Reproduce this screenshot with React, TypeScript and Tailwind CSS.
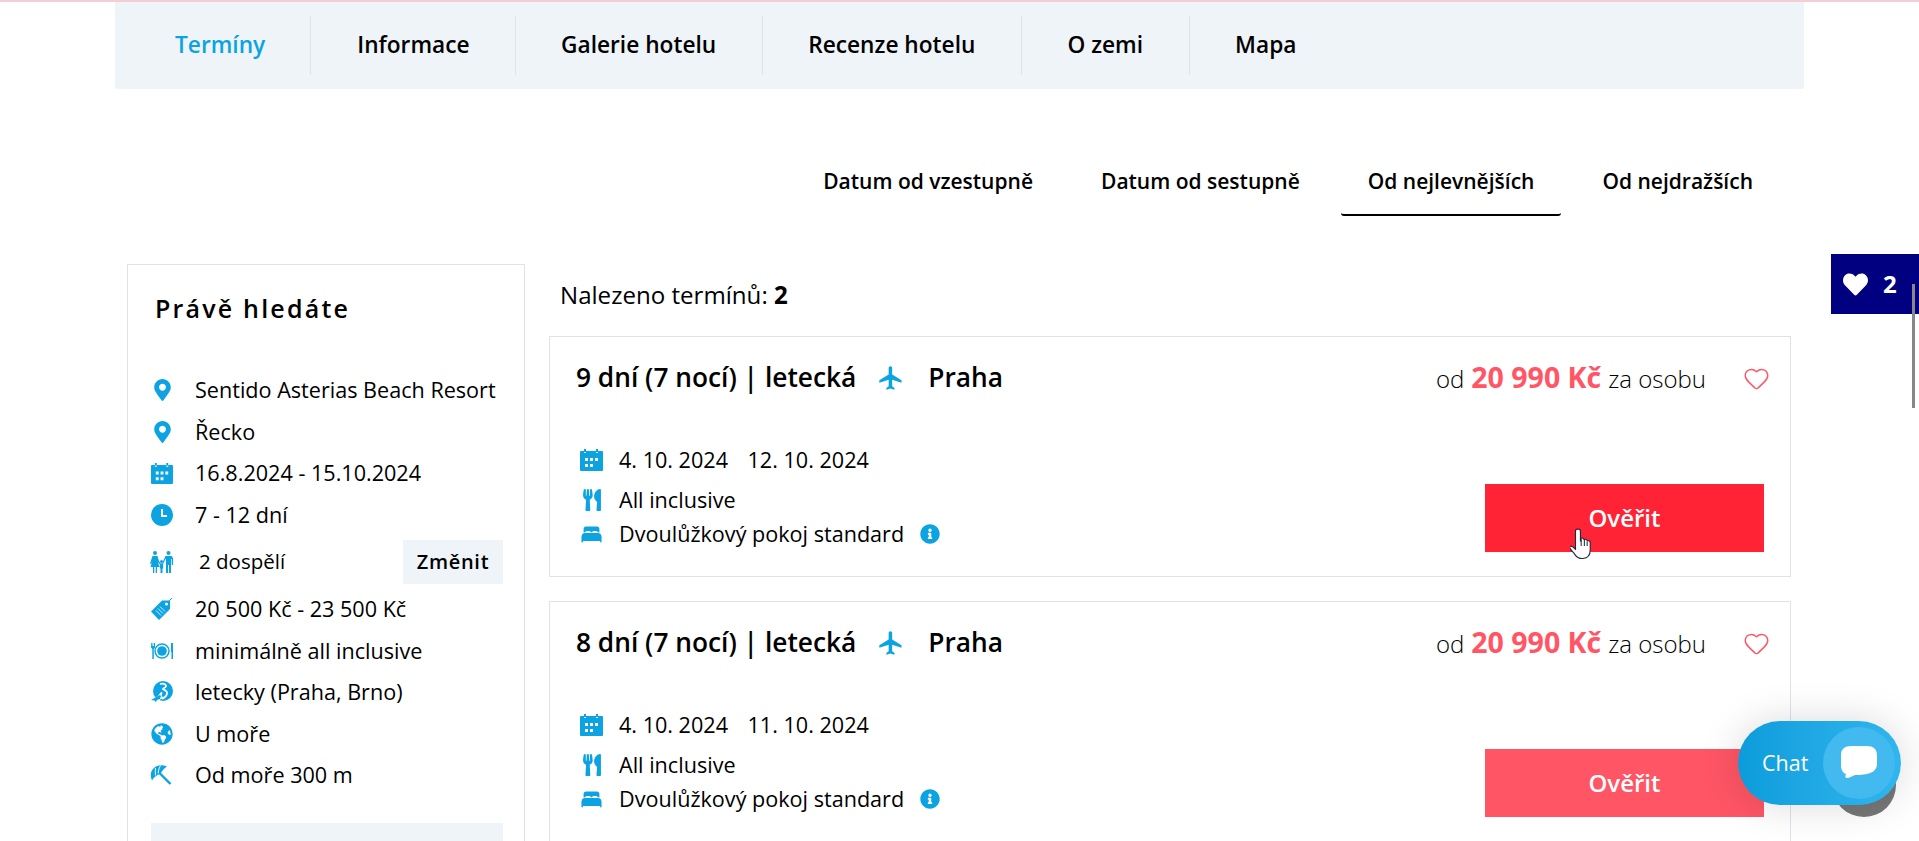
import React from "react";
import { FaMapMarkerAlt, FaGlobeAmericas, FaUtensils, FaInfoCircle, FaHeart } from "react-icons/fa";
import { MdFlight } from "react-icons/md";
import { IoBed } from "react-icons/io5";
import { Heart } from "lucide-react";

const BLUE = "text-[#0ca3e3]";

const CalendarIcon = ({ className = "" }: { className?: string }) => (
  <svg viewBox="0 0 23 22" className={className} fill="currentColor">
    <path d="M4 0h2v3H4zM16 0h2v3h-2z" />
    <path fillRule="evenodd" d="M1 2h3v2h2V2h10v2h2V2h4a1 1 0 0 1 1 1v18a1 1 0 0 1-1 1H1a1 1 0 0 1-1-1V3a1 1 0 0 1 1-1zM5 9v3h3V9zm5 0v3h3V9zm5 0v3h3V9zM5 15v3h3v-3zm5 0v3h3v-3z" />
  </svg>
);

const ClockIcon = ({ className = "" }: { className?: string }) => (
  <svg viewBox="0 0 22 22" className={className}>
    <circle cx="11" cy="11" r="11" fill="currentColor" />
    <path d="M11 5v7h5" stroke="#fff" strokeWidth="2" fill="none" />
  </svg>
);

const PeopleIcon = ({ className = "" }: { className?: string }) => (
  <svg viewBox="0 0 24 22" className={className} fill="currentColor">
    <circle cx="5" cy="2" r="2" />
    <path d="M2.500 5h5L9 10l2 3-1 .5-2-2.500L9.500 16H7v6H5.700v-6H4.300v6H3v-6H.5L2 11l-1 2-1-.5z" />
    <circle cx="18.500" cy="2" r="2" />
    <path d="M15.500 5h6L23 7v7h-1.300V8h-.7v14h-2v-8h-1v8h-2V8h-.5L13 13l-1-.6z" />
    <circle cx="11.500" cy="10.500" r="1.500" />
    <path d="M9.800 12.500h3.400v5h-.7V22h-2v-4.500h-.7z" />
  </svg>
);

const TagIcon = ({ className = "" }: { className?: string }) => (
  <svg viewBox="0 0 22 22" className={className} fill="currentColor">
    <path fillRule="evenodd" d="M0 13.500 11 2.500H19V11L8 22ZM15.500 4.500a1.500 1.500 0 1 0 0 3 1.500 1.500 0 0 0 0-3z" />
    <path d="M16 5 21 0" stroke="currentColor" strokeWidth="1" />
    <path d="M5 12.500l5 5M7 10.500l5 5M9 8.500l5 5" stroke="#fff" strokeWidth="0.8" />
  </svg>
);

const PlateIcon = ({ className = "" }: { className?: string }) => (
  <svg viewBox="0 0 22 22" className={className} fill="currentColor">
    <circle cx="11" cy="11" r="7" fill="none" stroke="currentColor" strokeWidth="1.400" />
    <circle cx="11" cy="11" r="4.800" />
    <path d="M0 3h.8v3h.7V3h.8v3h.7V3H4v4.500L2.800 9v10H1.300V9L0 7.500zM20 3h2v16h-1.500v-7H20z" />
  </svg>
);

const GlobePlaneIcon = ({ className = "" }: { className?: string }) => (
  <svg viewBox="0 0 22 22" className={className}>
    <circle cx="12" cy="10" r="10" fill="currentColor" />
    <path d="M9 3c3-1 6 0 6 2s-3 2-3 3 4 1 4 4-3 5-5 6" stroke="#fff" strokeWidth="1.800" fill="none" />
    <path d="M0 19l7-4 3-4 1.500.5-1 4 3 .5-1 1.500-3 .5-1 2.500-2-.5-1-1.500z" fill="#fff" />
    <path d="M0 19l7-4 2-1 1 1-1 3-3 1-1 2-1.500-1.500z" fill="currentColor" />
  </svg>
);

const UmbrellaIcon = ({ className = "" }: { className?: string }) => (
  <svg viewBox="0 0 22 22" className={className} fill="currentColor">
    <path d="M2 16.500C-2.500 7 6-2 17 2.500 14 4.500 12 6.500 10.500 10 7 10.500 4 13 2 16.500z" />
    <path d="M5.500 4Q5 8 5.500 11.500M10.500 1.500Q8.500 4.500 8 9.500" stroke="#fff" strokeWidth="0.900" fill="none" />
    <path d="M10 9.500l10.500 10.500" stroke="currentColor" strokeWidth="2.400" />
  </svg>
);

const ChatBubble = ({ className = "" }: { className?: string }) => (
  <svg viewBox="0 0 36 34" className={className} fill="#fff">
    <path d="M10 0h16c6 0 10 3 10 9v9c0 6-5 9-10 10-5 1-9 1-12 1-3 1-6 3-8 3-2 0-2-2-1-4-3-1-5-4-5-9V9C0 3 4 0 10 0z" />
  </svg>
);

const HandCursor = () => (
  <svg viewBox="0 0 24 32" className="absolute left-[1570px] top-[527px] w-[25px] h-[33px]">
    <path
      d="M8 2c1.300 0 2 1 2 2v9.500l.7-.1V11c1.600-.8 2.500 0 2.600 1l.5.2c1.500-.8 2.500 0 2.700 1l.5.300c1.500-.6 2.500.2 2.500 1.500v7c0 4-2 8-7 8.500-4 .3-6-1-8-4-1.500-2-4-4.500-4.800-6-.6-1.500 1-2.600 2.500-1.500l3 2.500V4c0-1.200.7-2 1.800-2z"
      fill="#fff"
      stroke="#1f2937"
      strokeWidth="1.100"
    />
    <path d="M10.700 13.500v5M13.800 12.500v6M16.500 14v4.500" stroke="#1f2937" strokeWidth="1" />
  </svg>
);

const tabs = [
  { label: "Termíny", cls: "pl-[60px] pr-[45px] text-[#0ca3e3]" },
  { label: "Informace", cls: "pl-[46px] pr-[45px] text-black border-l border-[#dfe4e8]" },
  { label: "Galerie hotelu", cls: "pl-[45.500px] pr-[45.500px] text-black border-l border-[#dfe4e8]" },
  { label: "Recenze hotelu", cls: "pl-[45.500px] pr-[45.500px] text-black border-l border-[#dfe4e8]" },
  { label: "O zemi", cls: "pl-[45.500px] pr-[45.500px] text-black border-l border-[#dfe4e8]" },
  { label: "Mapa", cls: "pl-[45.500px] pr-[45.500px] text-black border-l border-[#dfe4e8]" },
];

const sorts = ["Datum od vzestupně", "Datum od sestupně", "Od nejlevnějších", "Od nejdražších"];

function Row({ icon, children }: { icon: React.ReactNode; children: React.ReactNode }) {
  return (
    <div className="flex items-center h-[41.500px]">
      <div className={`w-[22px] h-[22px] mr-[22px] flex items-center justify-center shrink-0 ${BLUE}`}>{icon}</div>
      <div className="text-[21.600px] text-black whitespace-nowrap">{children}</div>
    </div>
  );
}

function Card({ term, from, to, btn }: { term: string; from: string; to: string; btn: string }) {
  return (
    <div className="relative h-[241px] border border-[#e0e2e8] pl-[26px] pr-[26px] pt-[21px]">
      <div className="flex items-center h-[40px]">
        <span className="text-[26.300px] font-semibold text-black whitespace-nowrap">{term}</span>
        <MdFlight className={`ml-[21px] w-[28px] h-[28px] ${BLUE}`} />
        <span className="ml-[23px] text-[26.300px] font-semibold text-black">Praha</span>
        <div className="ml-auto -mt-[2px] flex items-baseline text-[24px] font-light text-black whitespace-nowrap">
          <span>od</span>
          <span className="ml-[7px] text-[28.500px] font-bold text-[#ff5565]">20 990 Kč</span>
          <span className="ml-[7px]">za osobu</span>
        </div>
        <Heart className="ml-[37px] -mr-[6px] w-[27px] h-[27px] text-[#ff5565]" strokeWidth={1.300} />
      </div>
      <div className="flex items-start justify-between mt-[42px]">
        <div className="pl-[4px]">
          <div className="flex items-center h-[40px]">
            <CalendarIcon className={`w-[23px] h-[22px] ${BLUE}`} />
            <span className="ml-[16px] text-[21.600px] text-black">{from}</span>
            <span className="ml-[19.500px] text-[21.600px] text-black">{to}</span>
          </div>
          <div className="flex items-center h-[40px]">
            <div className="w-[23px] flex justify-center">
              <FaUtensils className={`w-[18px] h-[22px] ${BLUE}`} />
            </div>
            <span className="ml-[16px] text-[21.600px] text-black">All inclusive</span>
          </div>
          <div className="flex items-center h-[28px]">
            <IoBed className={`w-[23px] h-[23px] ${BLUE}`} />
            <span className="ml-[16px] text-[21.600px] text-black">Dvoulůžkový pokoj standard</span>
            <FaInfoCircle className={`ml-[16px] w-[20px] h-[20px] ${BLUE}`} />
          </div>
        </div>
        <button className={`w-[279px] h-[68px] mt-[44px] text-[24px] font-semibold text-white ${btn}`}>Ověřit</button>
      </div>
    </div>
  );
}

export default function App() {
  return (
    <div className="relative w-[1919px] h-[841px] overflow-hidden bg-white" style={{ fontFamily: '"Open Sans", "Noto Sans", sans-serif' }}>
      <div className="h-[2px] bg-[#f5cdd6]" />

      <div className="ml-[115px] w-[1689px] h-[87px] bg-[#eff4f8] flex items-center rounded-b-[2px]">
        {tabs.map((t) => (
          <div key={t.label} className={`h-[59px] flex items-center text-[22.700px] font-semibold whitespace-nowrap ${t.cls}`}>
            {t.label}
          </div>
        ))}
      </div>

      <div className="flex justify-end gap-[14px] mr-[139px] mt-[58px] h-[69px]">
        {sorts.map((s, i) => (
          <div
            key={s}
            className={`h-[69px] px-[27px] pt-[2px] flex items-center text-[21px] font-semibold text-black whitespace-nowrap ${i === 2 ? "border-b-2 border-black rounded-b-[3px]" : "border-b-2 border-transparent"}`}
          >
            {s}
          </div>
        ))}
      </div>

      <div className="flex ml-[127px] mr-[128px] mt-[48px] gap-[24px]">
        <aside className="w-[398px] h-[640px] border border-[#e0e2e8] pl-[23px] pr-[21px] shrink-0">
          <h2 className="mt-[25px] ml-[4px] text-[25px] font-semibold text-black tracking-[2.200px]">Právě hledáte</h2>
          <div className="mt-[42px]">
            <Row icon={<FaMapMarkerAlt className="w-[17px] h-[22px]" />}>Sentido Asterias Beach Resort</Row>
            <Row icon={<FaMapMarkerAlt className="w-[17px] h-[22px]" />}>Řecko</Row>
            <Row icon={<CalendarIcon className="w-[22px] h-[21px]" />}>16.8.2024 - 15.10.2024</Row>
            <Row icon={<ClockIcon className="w-[22px] h-[22px]" />}>7 - 12 dní</Row>
            <div className="flex items-center h-[44px] mt-[4px] mb-[5px]">
              <div className={`w-[22px] h-[22px] mr-[26px] flex items-center justify-center shrink-0 ${BLUE}`}>
                <PeopleIcon className="w-[24px] h-[22px] shrink-0" />
              </div>
              <span className="text-[20.500px] text-black">2 dospělí</span>
              <button className="ml-auto w-[100px] h-[44px] bg-[#eff4f8] text-[20px] font-semibold text-black tracking-[0.700px]">Změnit</button>
            </div>
            <Row icon={<TagIcon className="w-[22px] h-[22px]" />}>20 500 Kč - 23 500 Kč</Row>
            <Row icon={<PlateIcon className="w-[22px] h-[22px]" />}>minimálně all inclusive</Row>
            <Row icon={<GlobePlaneIcon className="w-[22px] h-[22px]" />}>letecky (Praha, Brno)</Row>
            <Row icon={<FaGlobeAmericas className="w-[22px] h-[22px]" />}>U moře</Row>
            <Row icon={<UmbrellaIcon className="w-[22px] h-[22px] -translate-x-[1px]" />}>Od moře 300 m</Row>
          </div>
          <div className="mt-[27px] h-[60px] bg-[#eff4f8]" />
        </aside>

        <main className="flex-1 min-w-0">
          <div className="mt-[15px] ml-[11px] h-[32px] flex items-center text-[24.100px] text-black">
            Nalezeno termínů:&nbsp;<b className="font-bold">2</b>
          </div>
          <div className="mt-[25px] flex flex-col gap-[24px]">
            <Card term="9 dní (7 nocí) | letecká" from="4. 10. 2024" to="12. 10. 2024" btn="bg-[#ff2335]" />
            <Card term="8 dní (7 nocí) | letecká" from="4. 10. 2024" to="11. 10. 2024" btn="bg-[#ff5565]" />
          </div>
        </main>
      </div>

      {/* favourites */}
      <div className="absolute left-[1831px] top-[254px] w-[88px] h-[60px] bg-[#000080] flex items-center pl-[12px] text-white">
        <FaHeart className="w-[25px] h-[25px]" />
        <span className="ml-[15px] text-[24px] font-bold">2</span>
      </div>
      {/* scrollbar */}
      <div className="absolute left-[1912px] top-[284px] w-[3px] h-[124px] bg-[#888]" />

      <HandCursor />

      {/* chat */}
      <div className="absolute left-[1832px] top-[753px] w-[64px] h-[64px] rounded-full bg-[#777]" />
      <div className="absolute left-[1738px] top-[721px] w-[163px] h-[84px] rounded-full bg-gradient-to-r from-[#0a9cdb] to-[#30b6ee] shadow-[0_0_40px_rgba(0,0,0,0.15)] flex items-center">
        <span className="ml-[24px] text-[21.500px] text-white">Chat</span>
        <div className="absolute left-[85px] top-[6px] w-[72px] h-[72px] rounded-full bg-[#42baef] flex items-center justify-center">
          <ChatBubble className="w-[36px] h-[34px]" />
        </div>
      </div>
    </div>
  );
}
